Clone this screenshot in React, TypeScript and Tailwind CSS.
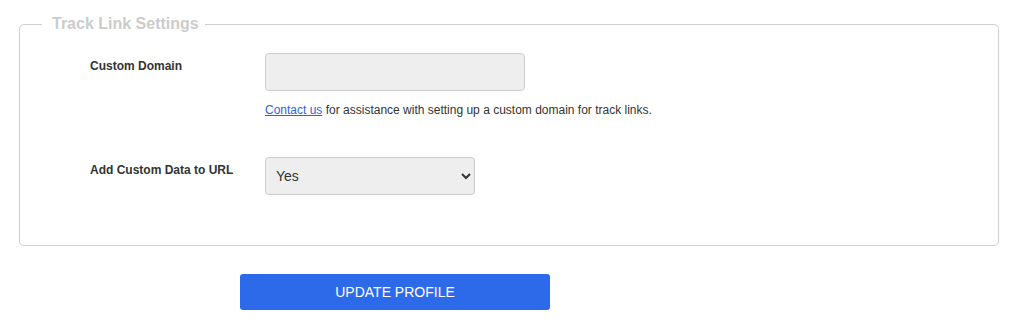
import { useState } from "react";

/* ── Component ── */

export default function App() {
  const [customDomain, setCustomDomain] = useState("");
  const [customData, setCustomData] = useState("yes");

  return (
    <div className="min-h-[328px] bg-white px-[19px] pt-[15px] font-['Liberation_Sans',Arial,sans-serif] text-[#333]">
      {/* Track link settings */}
      <fieldset className="rounded-[5px] border border-[#cfcfcf] px-0 pb-[50px]">
        <legend className="ml-[22px] pl-[10px] pr-[6px] text-[16px] font-bold leading-[18px] text-[#cccccc]">
          Track Link Settings
        </legend>

        <div className="grid grid-cols-[245px_1fr] pt-[20px]">
          <label className="pl-[70px] pt-[6px] text-[12px] font-bold leading-[14px]">Custom Domain</label>
          <div>
            <input
              type="text"
              value={customDomain}
              onChange={(event) => setCustomDomain(event.target.value)}
              disabled
              className="h-[38px] w-[260px] rounded-[4px] border border-[#ccc] bg-[#eee] px-2 text-[14px]"
            />
            <p className="mt-[12px] text-[12px] leading-[14px]">
              <a href="#" className="text-[#2f5fe0] underline">
                Contact us
              </a>{" "}
              for assistance with setting up a custom domain for track links.
            </p>
          </div>

          <label className="mt-[40px] pl-[70px] pt-[6px] text-[12px] font-bold leading-[14px]">
            Add Custom Data to URL
          </label>
          <div className="mt-[40px]">
            <select
              value={customData}
              onChange={(event) => setCustomData(event.target.value)}
              className="h-[38px] w-[210px] rounded-[4px] border border-[#ccc] bg-[#eee] pl-[6px] pr-2 text-[14px] text-[#333]"
            >
              <option value="yes">Yes</option>
              <option value="no">No</option>
            </select>
          </div>
        </div>
      </fieldset>

      <div className="mt-[28px] pl-[221px]">
        <button
          type="button"
          className="h-[36px] w-[310px] rounded-[3px] bg-[#2d6aea] text-[14px] uppercase text-white"
        >
          Update Profile
        </button>
      </div>
    </div>
  );
}
